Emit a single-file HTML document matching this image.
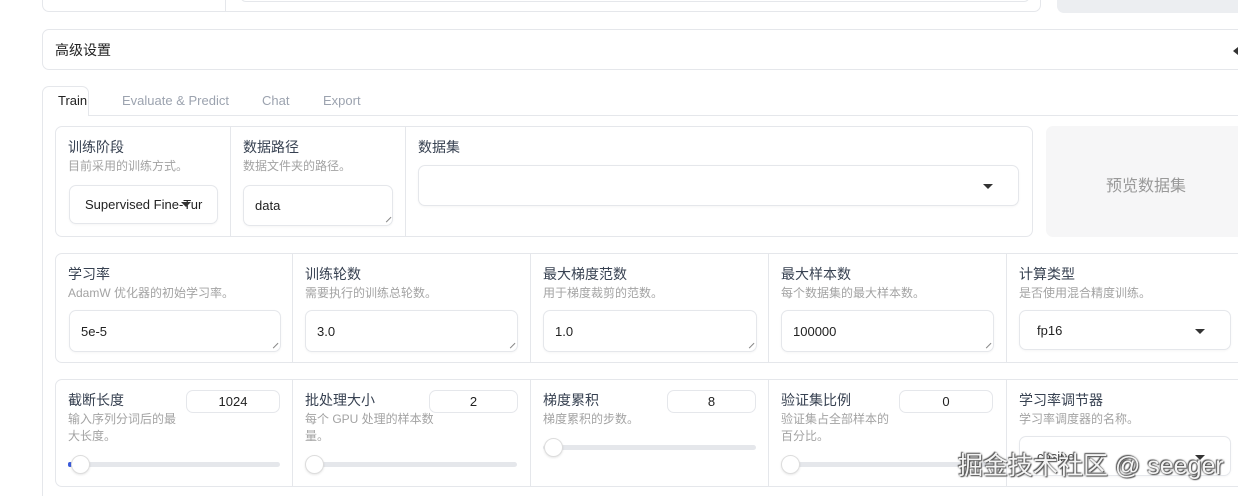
<!DOCTYPE html>
<html><head><meta charset="utf-8"><style>
*{box-sizing:border-box;margin:0;padding:0}
body{width:1238px;height:496px;overflow:hidden;background:#fff;font-family:"Liberation Sans","Noto Sans CJK SC",sans-serif;color:#333;position:relative}
.a{position:absolute}
.box{position:absolute;border:1px solid #e5e7eb;border-radius:7px;background:#fff}
.t{position:absolute;font-size:14px;color:#374151;white-space:nowrap}
.d{position:absolute;font-size:12px;color:#a3a3a3;line-height:17px}
.in{position:absolute;border:1px solid #e5e7eb;border-radius:7px;background:#fff;box-shadow:0 1px 2px rgba(0,0,0,.04);font-size:13px;color:#222;padding-left:11px;display:flex;align-items:center}
.vl{position:absolute;width:1px;background:#e5e7eb}
.tri{position:absolute;width:0;height:0;border-left:5px solid transparent;border-right:5px solid transparent;border-top:5px solid #333}
.trk{position:absolute;height:5px;background:#e5e7eb;border-radius:3px}
.th{position:absolute;width:19px;height:19px;border-radius:50%;background:#fff;border:1px solid #ddd;box-shadow:0 1px 2px rgba(0,0,0,.1)}
.num{position:absolute;border:1px solid #e5e7eb;border-radius:7px;font-size:13px;text-align:center;line-height:21px;color:#222}
.rz{position:absolute;width:7px;height:7px;border-right:1px solid #888;transform:rotate(45deg)}
</style></head><body>
<div class="box" style="left:42px;top:-20px;width:999px;height:32px"></div>
<div class="vl" style="left:225px;top:0;height:12px"></div>
<div class="a" style="left:240px;top:-10px;width:790px;height:12px;border:1px solid #e5e7eb;border-radius:6px"></div>
<div class="a" style="left:1057px;top:-10px;width:190px;height:23px;background:#eceef1;border-radius:7px"></div>
<div class="box" style="left:42px;top:29px;width:1210px;height:41px"></div>
<div class="t" style="left:55px;top:40px;color:#222">高级设置</div>
<div class="a" style="left:1233px;top:47px;width:0;height:0;border-top:4px solid transparent;border-bottom:4px solid transparent;border-right:5px solid #333"></div>
<div class="a" style="left:42px;top:115px;width:1200px;height:1px;background:#e5e7eb"></div>
<div class="a" style="left:42px;top:86px;width:47px;height:30px;border:1px solid #e5e7eb;border-bottom:none;border-radius:7px 7px 0 0;background:#fff"></div>
<div class="a" style="left:42px;top:115px;width:1px;height:381px;background:#e5e7eb"></div>
<div class="t" style="left:58px;top:93px;font-size:13px;color:#222">Train</div>
<div class="t" style="left:122px;top:93px;font-size:13px;color:#9ca3af">Evaluate &amp; Predict</div>
<div class="t" style="left:262px;top:93px;font-size:13px;color:#9ca3af">Chat</div>
<div class="t" style="left:323px;top:93px;font-size:13px;color:#9ca3af">Export</div>
<div class="box" style="left:55px;top:126px;width:978px;height:111px"></div>
<div class="vl" style="left:230px;top:127px;height:109px"></div>
<div class="vl" style="left:405px;top:127px;height:109px"></div>
<div class="t" style="left:68px;top:137px">训练阶段</div>
<div class="d" style="left:68px;top:158px">目前采用的训练方式。</div>
<div class="in" style="left:69px;top:185px;width:149px;height:39px;padding-left:15px;overflow:hidden">Supervised Fine-Tur</div>
<div class="tri" style="left:181px;top:202px"></div>
<div class="t" style="left:243px;top:137px">数据路径</div>
<div class="d" style="left:243px;top:158px">数据文件夹的路径。</div>
<div class="in" style="left:243px;top:185px;width:150px;height:41px">data</div>
<div class="rz" style="left:383px;top:214px"></div>
<div class="t" style="left:418px;top:137px">数据集</div>
<div class="in" style="left:418px;top:165px;width:601px;height:41px"></div>
<div class="tri" style="left:983px;top:184px"></div>
<div class="a" style="left:1046px;top:126px;width:200px;height:111px;background:#f6f6f7;border-radius:7px"></div>
<div class="t" style="left:1106px;top:172px;font-size:16px;color:#999">预览数据集</div>
<div class="box" style="left:55px;top:253px;width:1200px;height:110px"></div>
<div class="vl" style="left:292px;top:254px;height:108px"></div>
<div class="vl" style="left:530px;top:254px;height:108px"></div>
<div class="vl" style="left:768px;top:254px;height:108px"></div>
<div class="vl" style="left:1006px;top:254px;height:108px"></div>
<div class="t" style="left:68px;top:264px">学习率</div><div class="d" style="left:68px;top:285px">AdamW 优化器的初始学习率。</div>
<div class="in" style="left:69px;top:310px;width:212px;height:42px">5e-5</div><div class="rz" style="left:270px;top:340px"></div>
<div class="t" style="left:305px;top:264px">训练轮数</div><div class="d" style="left:305px;top:285px">需要执行的训练总轮数。</div>
<div class="in" style="left:305px;top:310px;width:213px;height:42px">3.0</div><div class="rz" style="left:507px;top:340px"></div>
<div class="t" style="left:543px;top:264px">最大梯度范数</div><div class="d" style="left:543px;top:285px">用于梯度裁剪的范数。</div>
<div class="in" style="left:543px;top:310px;width:214px;height:42px">1.0</div><div class="rz" style="left:746px;top:340px"></div>
<div class="t" style="left:781px;top:264px">最大样本数</div><div class="d" style="left:781px;top:285px">每个数据集的最大样本数。</div>
<div class="in" style="left:781px;top:310px;width:213px;height:42px">100000</div><div class="rz" style="left:983px;top:340px"></div>
<div class="t" style="left:1019px;top:264px">计算类型</div><div class="d" style="left:1019px;top:285px">是否使用混合精度训练。</div>
<div class="in" style="left:1019px;top:310px;width:212px;height:40px;padding-left:17px">fp16</div>
<div class="tri" style="left:1195px;top:329px"></div>
<div class="box" style="left:55px;top:379px;width:1200px;height:108px"></div>
<div class="vl" style="left:292px;top:380px;height:106px"></div>
<div class="vl" style="left:530px;top:380px;height:106px"></div>
<div class="vl" style="left:768px;top:380px;height:106px"></div>
<div class="vl" style="left:1006px;top:380px;height:106px"></div>
<div class="t" style="left:68px;top:390px">截断长度</div>
<div class="num" style="left:186px;top:390px;width:94px;height:23px">1024</div>
<div class="d" style="left:68px;top:411px;width:115px">输入序列分词后的最大长度。</div>
<div class="trk" style="left:69px;top:462px;width:211px"></div><div class="a" style="left:68px;top:462px;width:4px;height:5px;background:#3b5bdb;border-radius:2px"></div><div class="th" style="left:71px;top:455px"></div>
<div class="t" style="left:305px;top:390px">批处理大小</div>
<div class="num" style="left:429px;top:390px;width:89px;height:23px">2</div>
<div class="d" style="left:305px;top:411px;width:132px">每个 GPU 处理的样本数量。</div>
<div class="trk" style="left:305px;top:462px;width:212px"></div><div class="th" style="left:305px;top:455px"></div>
<div class="t" style="left:543px;top:390px">梯度累积</div>
<div class="num" style="left:667px;top:390px;width:89px;height:23px">8</div>
<div class="d" style="left:543px;top:411px">梯度累积的步数。</div>
<div class="trk" style="left:543px;top:445px;width:213px"></div><div class="th" style="left:544px;top:438px"></div>
<div class="t" style="left:781px;top:390px">验证集比例</div>
<div class="num" style="left:899px;top:390px;width:94px;height:23px">0</div>
<div class="d" style="left:781px;top:411px;width:115px">验证集占全部样本的百分比。</div>
<div class="trk" style="left:781px;top:462px;width:212px"></div><div class="th" style="left:781px;top:455px"></div>
<div class="t" style="left:1019px;top:390px">学习率调节器</div><div class="d" style="left:1019px;top:411px">学习率调度器的名称。</div>
<div class="in" style="left:1019px;top:436px;width:212px;height:40px;padding-left:17px;color:#444">cosine</div>
<div class="tri" style="left:1195px;top:455px"></div>
<div class="a" style="left:958px;top:446px;font-size:25px;color:#f4f4f4;white-space:nowrap;text-shadow:0 0 2px #555,1px 1px 1px #555,-1px -1px 1px #555">掘金技术社区 @ seeger</div>
</body></html>
